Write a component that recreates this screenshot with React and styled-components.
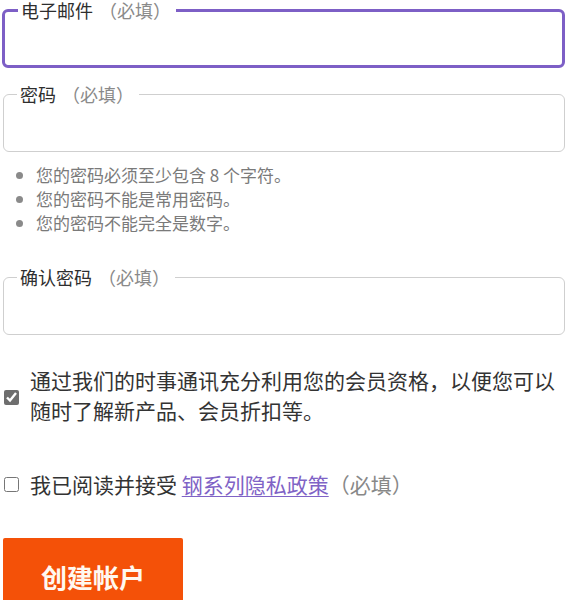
import React from 'react'
import styled, { createGlobalStyle } from 'styled-components'

const GlobalStyle = createGlobalStyle`
  html, body {
    margin: 0;
    padding: 0;
    background: #fff;
  }
  body {
    font-family: 'Noto Sans CJK SC', 'Noto Sans', sans-serif;
    color: #333;
  }
`

const Form = styled.form`
  display: flex;
  flex-direction: column;
  padding: 1px 1px 0 2px;
`

const Field = styled.fieldset`
  margin: ${props => props.top || 0}px 0 0 ${props => (props.focused ? 0 : 1)}px;
  padding: 0 12px;
  border: ${props => (props.focused ? '3px solid #7d5fc6' : '1px solid #cfcfcf')};
  border-radius: 6px;
  min-width: 0;
`

const Legend = styled.legend`
  margin-left: 1px;
  padding: 0 5px 0 3px;
  font-size: 18px;
  line-height: 19px;
  color: #2e2e2e;
`

const Required = styled.span`
  color: #8a8a8a;
  margin-left: 6px;
`

const Input = styled.input`
  display: block;
  width: 100%;
  height: ${props => props.h}px;
  border: none;
  outline: none;
  padding: 0;
  background: transparent;
  font: inherit;
`

const Hints = styled.ul`
  margin: 11px 0 0;
  padding-left: 34px;
  color: #7a7a7a;
  font-size: 17px;
  line-height: 24px;

  li::marker {
    color: #8a8a8a;
  }
`

const CheckRow = styled.label`
  display: flex;
  align-items: center;
  gap: 11px;
  margin-top: ${props => props.top}px;
  font-size: 21px;
  line-height: 30px;
  color: #333;
`

const Check = styled.input`
  flex: none;
  width: 15px;
  height: 15px;
  margin: ${props => props.offset || 0}px 0 0 2px;
  accent-color: #6e6e6e;
`

const Link = styled.a`
  color: #7f63c6;
  text-decoration: underline;
  text-underline-offset: 3px;
  text-decoration-thickness: 1px;
`

const Muted = styled.span`
  color: #888;
`

const Submit = styled.button`
  align-self: flex-start;
  margin: 39px 0 0 1px;
  width: 180px;
  height: 76px;
  border: none;
  border-radius: 2px 2px 0 0;
  background: #f45108;
  color: #fff8f0;
  font-family: 'Noto Sans CJK SC', sans-serif;
  font-size: 26px;
  font-weight: 700;
  padding: 0;
`

const TextField = ({ label, focused, top, h, type }) => (
  <Field focused={focused} top={top}>
    <Legend>
      {label}
      <Required>（必填）</Required>
    </Legend>
    <Input h={h} type={type} />
  </Field>
)

const App = () => (
  <>
    <GlobalStyle />
    <Form onSubmit={e => e.preventDefault()}>
      <TextField label="电子邮件" type="email" focused h={45} />
      <TextField label="密码" type="password" top={17} h={47} />
      <Hints>
        <li>您的密码必须至少包含 8 个字符。</li>
        <li>您的密码不能是常用密码。</li>
        <li>您的密码不能完全是数字。</li>
      </Hints>
      <TextField label="确认密码" type="password" top={33} h={47} />
      <CheckRow top={30}>
        <Check type="checkbox" defaultChecked offset={4} />
        <span>
          通过我们的时事通讯充分利用您的会员资格，以便您可以随时了解新产品、会员折扣等。
        </span>
      </CheckRow>
      <CheckRow top={44}>
        <Check type="checkbox" />
        <span>
          我已阅读并接受 <Link href="#">钢系列隐私政策</Link><Muted>（必填）</Muted>
        </span>
      </CheckRow>
      <Submit type="submit">创建帐户</Submit>
    </Form>
  </>
)

export default App
